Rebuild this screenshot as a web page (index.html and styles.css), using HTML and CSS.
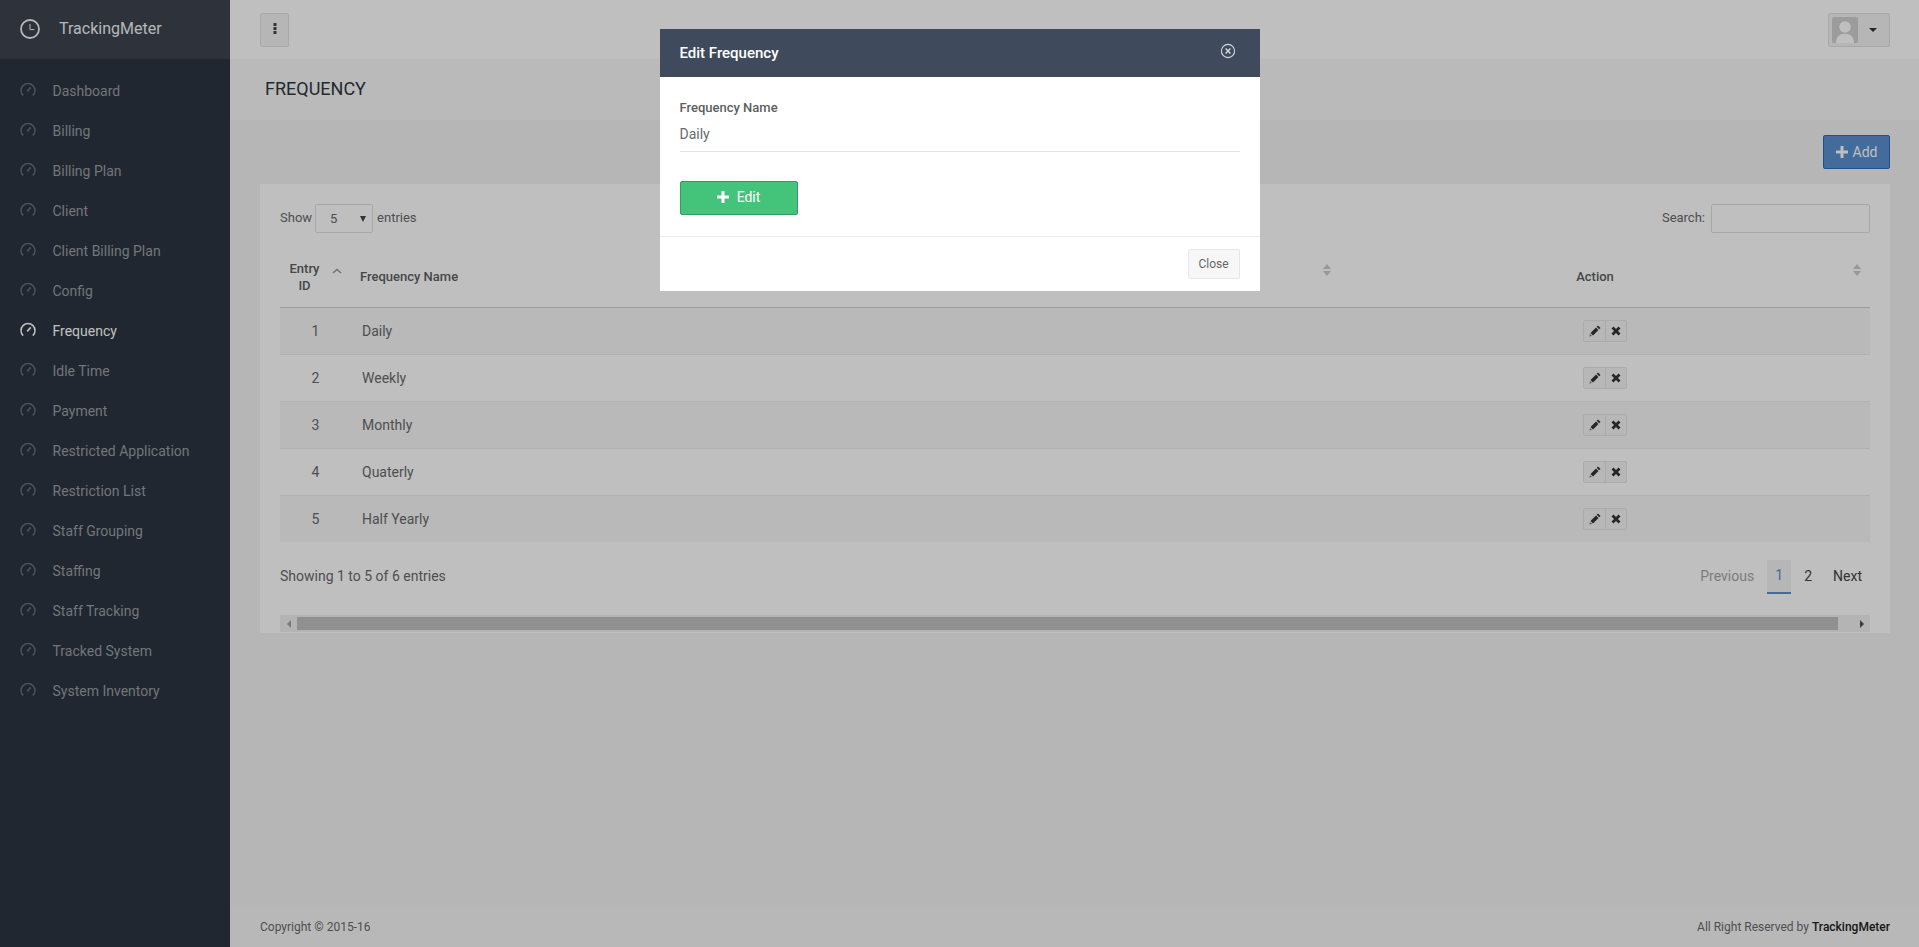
FILE: index.html
```html
<!DOCTYPE html>
<html lang="en">
<head>
  <meta charset="UTF-8" />
  <meta name="viewport" content="width=device-width, initial-scale=1.0"/>
  <title>TrackingMeter - Frequency</title>
  <link rel="stylesheet" href="styles.css">
</head>
<body>
  <svg class="defs" width="0" height="0">
    <symbol id="gauge" viewBox="0 0 16 16">
      <path d="M3.2 13.6A7 7 0 1 1 12.8 13.6" fill="none" stroke="currentColor" stroke-width="1.5"/>
      <path d="M7.2 9.4L10.8 5.4" fill="none" stroke="currentColor" stroke-width="1.6"/>
    </symbol>
    <symbol id="pencil" viewBox="0 0 12 12">
      <path d="M9 .5L11.5 3 10.2 4.3 7.7 1.8ZM7 2.5L9.5 5 4 10.5 1.5 8Z" fill="currentColor"/>
      <path d="M1 9L3 11 .4 11.6Z" fill="#b5672a"/>
    </symbol>
    <symbol id="cross" viewBox="0 0 12 12">
      <path d="M2.5 2.5L9.5 9.5M9.5 2.5L2.5 9.5" fill="none" stroke="currentColor" stroke-width="2.8"/>
    </symbol>
    <symbol id="plus" viewBox="0 0 12 12">
      <path d="M6 0V12M0 6H12" fill="none" stroke="currentColor" stroke-width="3"/>
    </symbol>
  </svg>

  <div class="app">
    <aside class="sidebar">
      <div class="brand">
        <svg class="brand-icon" viewBox="0 0 20 20">
          <circle cx="10" cy="10" r="9" fill="none" stroke="currentColor" stroke-width="1.8"/>
          <path d="M10 5V10.6H14.4" fill="none" stroke="currentColor" stroke-width="1"/>
        </svg>
        <span class="brand-name">TrackingMeter</span>
      </div>
      <nav class="nav">
        <a class="nav-item"><svg class="nav-icon"><use href="#gauge"/></svg>Dashboard</a>
        <a class="nav-item"><svg class="nav-icon"><use href="#gauge"/></svg>Billing</a>
        <a class="nav-item"><svg class="nav-icon"><use href="#gauge"/></svg>Billing Plan</a>
        <a class="nav-item"><svg class="nav-icon"><use href="#gauge"/></svg>Client</a>
        <a class="nav-item"><svg class="nav-icon"><use href="#gauge"/></svg>Client Billing Plan</a>
        <a class="nav-item"><svg class="nav-icon"><use href="#gauge"/></svg>Config</a>
        <a class="nav-item active"><svg class="nav-icon"><use href="#gauge"/></svg>Frequency</a>
        <a class="nav-item"><svg class="nav-icon"><use href="#gauge"/></svg>Idle Time</a>
        <a class="nav-item"><svg class="nav-icon"><use href="#gauge"/></svg>Payment</a>
        <a class="nav-item"><svg class="nav-icon"><use href="#gauge"/></svg>Restricted Application</a>
        <a class="nav-item"><svg class="nav-icon"><use href="#gauge"/></svg>Restriction List</a>
        <a class="nav-item"><svg class="nav-icon"><use href="#gauge"/></svg>Staff Grouping</a>
        <a class="nav-item"><svg class="nav-icon"><use href="#gauge"/></svg>Staffing</a>
        <a class="nav-item"><svg class="nav-icon"><use href="#gauge"/></svg>Staff Tracking</a>
        <a class="nav-item"><svg class="nav-icon"><use href="#gauge"/></svg>Tracked System</a>
        <a class="nav-item"><svg class="nav-icon"><use href="#gauge"/></svg>System Inventory</a>
      </nav>
    </aside>

    <div class="main">
      <header class="topbar">
        <button class="menu-btn">
          <svg width="4" height="11" viewBox="0 0 4 11"><path d="M.5 0h3v3h-3zM.5 4h3v3h-3zM.5 8h3v3h-3z" fill="currentColor"/></svg>
        </button>
        <button class="user-btn">
          <svg class="avatar" viewBox="0 0 26 26">
            <rect width="26" height="26" rx="2" fill="#d0d0d0"/>
            <circle cx="13" cy="10" r="5.8" fill="#fff"/>
            <path d="M4 26c0-6 3-8 6-9h6c3 1 6 3 6 9z" fill="#fff"/>
          </svg>
          <span class="caret"></span>
        </button>
      </header>

      <div class="page-title">
        <h1>FREQUENCY</h1>
      </div>

      <main class="content">
        <div class="actions">
          <button class="btn-add"><svg class="plus-icon"><use href="#plus"/></svg>Add</button>
        </div>

        <section class="card">
          <div class="table-tools">
            <label class="length">Show
              <span class="select-wrap">
                <select><option>5</option><option>10</option></select>
              </span>
              entries</label>
            <label class="search">Search: <input type="text"></label>
          </div>

          <table class="data-table">
            <thead>
              <tr>
                <th class="col-id">Entry ID
                  <svg class="sort-up" width="10" height="6" viewBox="0 0 10 6"><path d="M1 5L5 1.4 9 5" fill="none" stroke="currentColor" stroke-width="1.5"/></svg>
                </th>
                <th class="col-name">Frequency Name<span class="sort"></span></th>
                <th class="col-action">Action<span class="sort"></span></th>
              </tr>
            </thead>
            <tbody>
              <tr>
                <td class="cell-id">1</td><td class="cell-name">Daily</td>
                <td class="cell-action"><span class="btn-group"><button><svg><use href="#pencil"/></svg></button><button><svg><use href="#cross"/></svg></button></span></td>
              </tr>
              <tr>
                <td class="cell-id">2</td><td class="cell-name">Weekly</td>
                <td class="cell-action"><span class="btn-group"><button><svg><use href="#pencil"/></svg></button><button><svg><use href="#cross"/></svg></button></span></td>
              </tr>
              <tr>
                <td class="cell-id">3</td><td class="cell-name">Monthly</td>
                <td class="cell-action"><span class="btn-group"><button><svg><use href="#pencil"/></svg></button><button><svg><use href="#cross"/></svg></button></span></td>
              </tr>
              <tr>
                <td class="cell-id">4</td><td class="cell-name">Quaterly</td>
                <td class="cell-action"><span class="btn-group"><button><svg><use href="#pencil"/></svg></button><button><svg><use href="#cross"/></svg></button></span></td>
              </tr>
              <tr>
                <td class="cell-id">5</td><td class="cell-name">Half Yearly</td>
                <td class="cell-action"><span class="btn-group"><button><svg><use href="#pencil"/></svg></button><button><svg><use href="#cross"/></svg></button></span></td>
              </tr>
            </tbody>
          </table>

          <div class="table-foot">
            <div class="info">Showing 1 to 5 of 6 entries</div>
            <div class="pager">
              <a class="disabled">Previous</a>
              <a class="current">1</a>
              <a>2</a>
              <a>Next</a>
            </div>
          </div>

          <div class="hscroll">
            <span class="arrow-left"></span>
            <span class="thumb"></span>
            <span class="arrow-right"></span>
          </div>
        </section>
      </main>

      <footer class="footer">
        <span>Copyright © 2015-16</span>
        <span>All Right Reserved by <strong>TrackingMeter</strong></span>
      </footer>
    </div>
  </div>

  <div class="backdrop"></div>

  <div class="modal-wrap">
    <div class="modal">
      <div class="modal-head">
        <h2>Edit Frequency</h2>
        <svg class="modal-close" viewBox="0 0 16 16">
          <circle cx="8" cy="8" r="6.6" fill="none" stroke="currentColor" stroke-width="1.1"/>
          <path d="M5.6 5.6L10.4 10.4M10.4 5.6L5.6 10.4" fill="none" stroke="currentColor" stroke-width="1.4"/>
        </svg>
      </div>
      <form class="modal-body">
        <label class="field-label">Frequency Name</label>
        <input class="field" type="text" value="Daily">
        <button class="btn-edit" type="button"><svg class="plus-icon"><use href="#plus"/></svg>Edit</button>
      </form>
      <div class="modal-foot">
        <button class="btn-close" type="button">Close</button>
      </div>
    </div>
  </div>
</body>
</html>
```

FILE: styles.css
```css
* { box-sizing: border-box; }

html, body { height: 100%; }

body {
  margin: 0;
  font-family: Roboto, "Liberation Sans", sans-serif;
  font-size: 14px;
  color: #676a6c;
  background: #f3f3f4;
  overflow: hidden;
}

button, input, select { font-family: inherit; }

.defs { position: absolute; }

.app {
  display: flex;
  height: 947px;
}

/* sidebar */
.sidebar {
  width: 230px;
  flex: none;
  background: #2c3540;
}
.brand {
  height: 59px;
  display: flex;
  align-items: center;
  padding-left: 20px;
  background: #3c434f;
  color: #f2f3f4;
  font-size: 16px;
}
.brand-icon {
  width: 20px;
  height: 20px;
  margin-right: 19px;
  margin-bottom: 1px;
}
.brand-name { padding-bottom: 2px; }
.nav { padding-top: 12px; }
.nav-item {
  display: flex;
  align-items: center;
  height: 40px;
  padding-left: 20px;
  color: #999da3;
  cursor: pointer;
}
.nav-icon {
  width: 16px;
  height: 16px;
  margin-right: 16.5px;
  margin-bottom: 2px;
  color: #656c75;
}
.nav-item.active { color: #fff; }
.nav-item.active .nav-icon { color: #fff; }

/* main column */
.main {
  flex: 1;
  min-width: 0;
  display: flex;
  flex-direction: column;
}
.topbar {
  height: 59px;
  flex: none;
  display: flex;
  align-items: center;
  justify-content: space-between;
  padding: 0 29px 0 30px;
  background: #fff;
}
.menu-btn {
  width: 29px;
  height: 34px;
  display: flex;
  align-items: center;
  justify-content: center;
  padding: 0 0 3px;
  border: 1px solid #e0e0e0;
  border-radius: 2px;
  background: #f3f3f3;
  color: #444;
}
.user-btn {
  width: 62px;
  height: 34px;
  display: flex;
  align-items: center;
  padding: 0 0 0 3px;
  border: 1px solid #e0e0e0;
  border-radius: 2px;
  background: #f3f3f3;
}
.avatar { width: 26px; height: 26px; }
.caret {
  margin-left: 11px;
  border-top: 4px solid #333;
  border-left: 4px solid transparent;
  border-right: 4px solid transparent;
}

.page-title {
  height: 61px;
  flex: none;
  display: flex;
  align-items: center;
  padding-left: 35px;
  background: #f9f9f9;
}
h1 {
  margin: 0 0 2px;
  font-size: 18px;
  font-weight: 400;
  color: #2f3742;
}

.content {
  flex: 1;
  padding: 15px 29px 0 30px;
}
.actions {
  display: flex;
  justify-content: flex-end;
  margin-bottom: 15px;
}
.btn-add {
  width: 67px;
  height: 34px;
  display: flex;
  align-items: center;
  justify-content: center;
  padding: 0;
  border: 1px solid #2a6cb8;
  border-radius: 2px;
  background: #5a8fd0;
  color: #fff;
  font-size: 14px;
}
.plus-icon {
  width: 12px;
  height: 12px;
  margin-right: 5px;
}

/* table card */
.card {
  background: #fff;
  padding: 20px 20px 1px;
}
.table-tools {
  display: flex;
  justify-content: space-between;
  height: 29px;
  font-size: 13px;
}
.length, .search {
  display: flex;
  align-items: center;
  padding-bottom: 3px;
}
.select-wrap {
  position: relative;
  margin: 3px 4px 0 3px;
}
.select-wrap::after {
  content: "";
  position: absolute;
  right: 7px;
  top: 12px;
  border-top: 6px solid #444;
  border-left: 3px solid transparent;
  border-right: 3px solid transparent;
}
.select-wrap select {
  display: block;
  width: 58px;
  height: 29px;
  padding: 0 0 0 14px;
  appearance: none;
  border: 1px solid #e0e0e0;
  border-radius: 2px;
  background: #fff;
  color: #676a6c;
  font-size: 13px;
}
.search input {
  width: 159px;
  height: 29px;
  margin: 3px 0 0 6px;
  border: 1px solid #e0e0e0;
  border-radius: 2px;
  background: #fff;
}

.data-table {
  width: 1590px;
  margin-top: 19px;
  border-collapse: collapse;
  table-layout: fixed;
}
.data-table th {
  position: relative;
  height: 55px;
  border-bottom: 1px solid #d0d0d0;
  font-size: 13px;
  font-weight: 500;
  line-height: 17px;
  color: #5c5f61;
}
.col-id {
  width: 67px;
  padding: 0 26px 5px 8px;
  text-align: center;
}
.col-name {
  width: 993px;
  padding: 0 0 5px 13px;
  text-align: left;
}
.col-action {
  padding: 0 32px 5px 12px;
  text-align: center;
}
.sort-up {
  position: absolute;
  top: 16px;
  right: 5px;
  color: #999;
}
.sort {
  position: absolute;
  top: 12px;
  right: 9px;
  width: 8px;
  height: 12px;
}
.sort::before, .sort::after {
  content: "";
  position: absolute;
  left: 0;
  border-left: 4px solid transparent;
  border-right: 4px solid transparent;
}
.sort::before { top: 0; border-bottom: 5px solid #cbcbcb; }
.sort::after { bottom: 0; border-top: 5px solid #cbcbcb; }

.data-table td {
  height: 47px;
  padding: 0;
  border-bottom: 1px solid #ececec;
}
.data-table tbody tr:nth-child(odd) { background: #f7f7f7; }
.data-table tbody tr:last-child td { border-bottom: 0; }
.data-table .cell-id { padding-left: 4px; text-align: center; }
.data-table .cell-name { padding-left: 15px; }
.cell-action { text-align: center; }

.btn-group {
  display: inline-flex;
  vertical-align: middle;
  border: 1px solid #e4e4e4;
  border-radius: 2px;
}
.btn-group button {
  width: 21px;
  height: 20px;
  display: flex;
  align-items: center;
  justify-content: center;
  padding: 0;
  border: 0;
  background: #f5f5f5;
  color: #333;
}
.btn-group button + button { border-left: 1px solid #e4e4e4; }
.btn-group svg { width: 12px; height: 12px; }

.table-foot {
  display: flex;
  justify-content: space-between;
  align-items: center;
  margin-top: 18px;
}
.info { padding-bottom: 2px; }
.pager {
  display: flex;
  height: 34px;
}
.pager a {
  display: flex;
  align-items: center;
  padding: 0 10px 2px;
  color: #444;
  cursor: pointer;
}
.pager .disabled { color: #a6a6a6; padding-right: 13px; }
.pager .current {
  width: 24px;
  padding: 0 0 2px;
  justify-content: center;
  border-bottom: 2px solid #5a8fd0;
  background: #f3f3f3;
  color: #5a8fd0;
}
.pager a:nth-child(3) { padding: 0 11px 2px 13px; }
.pager a:last-child { padding: 0 8px 2px 10px; }

.hscroll {
  display: flex;
  align-items: center;
  height: 17px;
  margin-top: 21px;
  background: #f1f1f1;
}
.hscroll .thumb {
  flex: 1;
  height: 13px;
  background: #c1c1c1;
}
.arrow-left, .arrow-right {
  flex: none;
  display: flex;
  justify-content: center;
  width: 17px;
}
.arrow-right { width: 32px; justify-content: flex-end; padding-right: 6px; }
.arrow-left::before {
  content: "";
  border-right: 4px solid #a3a3a3;
  border-top: 4px solid transparent;
  border-bottom: 4px solid transparent;
}
.arrow-right::before {
  content: "";
  border-left: 4px solid #505050;
  border-top: 4px solid transparent;
  border-bottom: 4px solid transparent;
}

.footer {
  height: 41px;
  flex: none;
  display: flex;
  align-items: center;
  justify-content: space-between;
  padding: 0 29px 0 30px;
  background: #f6f6f6;
  font-size: 12px;
}
.footer strong { font-weight: 500; color: #222; }

/* modal */
.backdrop {
  position: fixed;
  inset: 0;
  background: #000;
  opacity: 0.25;
}
.modal-wrap {
  position: fixed;
  inset: 0;
}
.modal {
  width: 600px;
  margin: 29px auto 0;
  background: #fff;
}
.modal-head {
  height: 48px;
  display: flex;
  align-items: center;
  justify-content: space-between;
  padding: 0 24px 0 20px;
  background: #3f4b5c;
  color: #fff;
}
.modal-head h2 {
  margin: 0;
  font-size: 15px;
  font-weight: 500;
}
.modal-close {
  width: 16px;
  height: 16px;
  margin-bottom: 4px;
  color: #d5d8dc;
}
.modal-body {
  height: 159px;
  padding: 23px 20px 0;
}
.field-label {
  display: block;
  font-size: 13px;
  font-weight: 500;
  line-height: 16px;
  color: #5c5f61;
}
.field {
  display: block;
  width: 100%;
  height: 36px;
  padding: 0;
  border: 0;
  border-bottom: 1px solid #e5e5e5;
  outline: none;
  font-size: 14px;
  color: #676a6c;
}
.btn-edit {
  width: 118px;
  height: 34px;
  display: flex;
  align-items: center;
  justify-content: center;
  margin-top: 29px;
  padding: 0 0 2px;
  border: 1px solid #2f9e5e;
  border-radius: 2px;
  background: #43c47a;
  color: #fff;
  font-size: 14px;
  font-weight: 400;
}
.btn-edit .plus-icon { margin-right: 8px; }
.modal-foot {
  height: 55px;
  display: flex;
  justify-content: flex-end;
  padding: 12px 20px 0;
  border-top: 1px solid #eee;
}
.btn-close {
  width: 52px;
  height: 30px;
  padding: 0;
  border: 1px solid #e7e7e7;
  border-radius: 2px;
  background: #f7f7f7;
  color: #666;
  font-size: 12px;
}
```
